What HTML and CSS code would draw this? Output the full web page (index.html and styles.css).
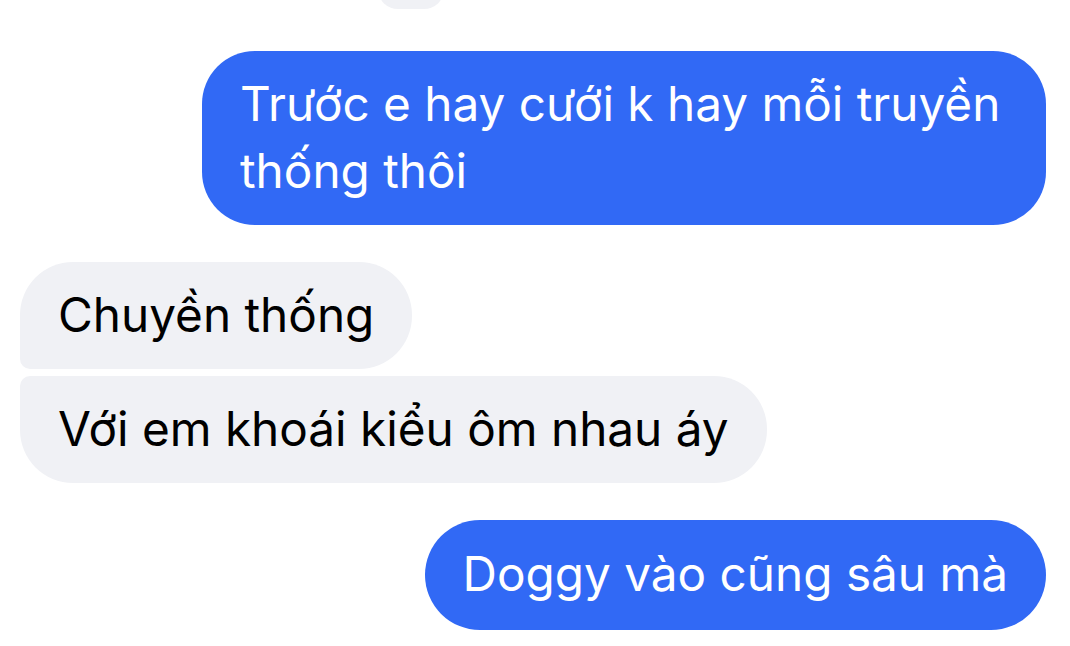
FILE: index.html
```html
<!DOCTYPE html>
<html lang="vi">
<head>
<meta charset="utf-8">
<title>Chat</title>
<link rel="stylesheet" href="styles.css">
</head>
<body>
<div class="chat">
  <div class="stub"></div>
  <div class="bubble out wide">Trước e hay cưới k hay mỗi truyền thống thôi</div>
  <div class="bubble in first">Chuyền thống</div>
  <div class="bubble in last">Với em khoái kiểu ôm nhau áy</div>
  <div class="bubble out single">Doggy vào cũng sâu mà</div>
</div>
</body>
</html>
```
FILE: styles.css
```css
html, body {
  margin: 0;
  background: #ffffff;
}
body {
  font-family: Inter, "Noto Sans", sans-serif;
  height: 646px;
  overflow: hidden;
}
.chat {
  display: flex;
  flex-direction: column;
  padding: 0 24px 0 20px;
}
.stub {
  align-self: flex-start;
  margin-left: 358px;
  margin-top: -31px;
  width: 66px;
  height: 40px;
  background: #f0f1f5;
  border-radius: 20px;
}
.bubble {
  box-sizing: border-box;
  padding: 20px 38px;
  font-size: 47.7px;
  line-height: 67px;
  border-radius: 53px;
}
.out {
  align-self: flex-end;
  background: #3169f5;
  color: #ffffff;
}
.in {
  align-self: flex-start;
  background: #f0f1f5;
  color: #000000;
}
.wide {
  max-width: 844px;
  margin-top: 42px;
}
.first {
  margin-top: 37px;
  border-radius: 53px 53px 53px 10px;
}
.last {
  margin-top: 7px;
  border-radius: 10px 53px 53px 53px;
}
.single {
  margin-top: 37px;
  padding-top: 21px;
  padding-bottom: 22px;
  border-radius: 56px;
}
```
